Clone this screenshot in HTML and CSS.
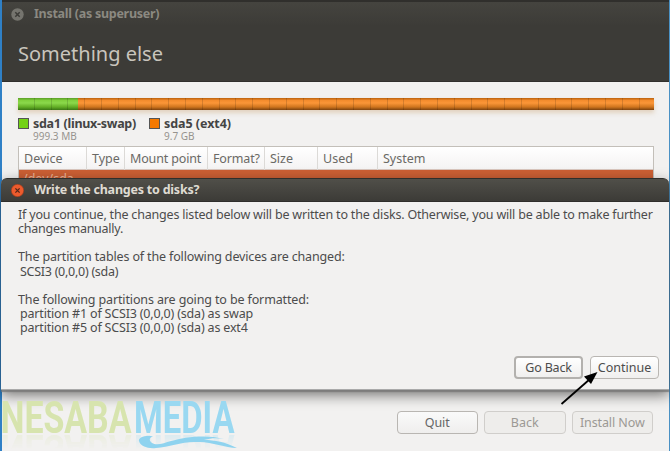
FILE: index.html
```html
<!DOCTYPE html>
<html lang="en">
<head>
<meta charset="utf-8">
<title>Install</title>
<link rel="stylesheet" href="styles.css">
</head>
<body>
<main class="window">
  <header class="head">
    <div class="titlebar">
      <svg class="close" viewBox="0 0 13 13"><circle cx="6.5" cy="6.5" r="6.2" fill="#75746e"/><path d="M4.3 4.3l4.4 4.4M8.7 4.3L4.3 8.7" stroke="#3c3b37" stroke-width="1.5"/></svg>
      <span class="t-install">Install (as superuser)</span>
    </div>
    <h1>Something else</h1>
  </header>
  <section class="content">
    <div class="disk"><div class="swap"></div><div class="ext"></div></div>
    <div class="legend">
      <div class="item first"><i class="sw green"></i><div><b class="l1">sda1 (linux-swap)</b><small>999.3 MB</small></div></div>
      <div class="item"><i class="sw orange"></i><div><b class="l2">sda5 (ext4)</b><small>9.7 GB</small></div></div>
    </div>
    <div class="table">
      <div class="thead">
        <span>Device</span><span>Type</span><span class="mount">Mount point</span><span class="format">Format?</span><span>Size</span><span>Used</span><span>System</span>
      </div>
      <div class="row">/dev/sda</div>
    </div>
  </section>
  <footer class="actions">
    <button class="btn">Quit</button><button class="btn off">Back</button><button class="btn off inst">Install Now</button>
  </footer>
</main>
<section class="dialog">
  <div class="dialog-title">
    <svg class="close" viewBox="0 0 13 13"><circle cx="6.5" cy="6.5" r="6.2" fill="#ed5b2d" stroke="#a43a1b" stroke-width=".6"/><path d="M4.4 4.4l4.2 4.2M8.6 4.4L4.4 8.6" stroke="#54271a" stroke-width="1.3"/></svg>
    <span class="t-write">Write the changes to disks?</span>
  </div>
  <div class="message">
    <p class="m1">If you continue, the changes listed below will be written to the disks. Otherwise, you will be able to make further</p>
    <p class="m2">changes manually.</p>
    <p class="m3 gap">The partition tables of the following devices are changed:</p>
    <p class="m4 in">SCSI3 (0,0,0) (sda)</p>
    <p class="m5 gap">The following partitions are going to be formatted:</p>
    <p class="m6 in">partition #1 of SCSI3 (0,0,0) (sda) as swap</p>
    <p class="m6 in">partition #5 of SCSI3 (0,0,0) (sda) as ext4</p>
  </div>
  <div class="choices"><button class="btn back">Go Back</button><button class="btn cont">Continue</button></div>
</section>
<div class="brand">
  <svg class="words" width="240" height="34" viewBox="0 0 240 34">
    <text x="-1.5" y="33" textLength="131" lengthAdjust="spacingAndGlyphs" fill="#d7e4ae">NESABA</text>
    <text x="132" y="32.5" textLength="100.5" lengthAdjust="spacingAndGlyphs" fill="#99d8f1">MEDIA</text>
  </svg>
  <svg class="wave" width="102" height="14" viewBox="0 0 102 14"><path d="M15 .5C6-1 0 2 1 5c1 5 9 8 17 7 14-1 26-7 43-6 14 0 26 6 38 6C87 6 77 4 66 4c7-2 13-2 20-1C68-2 47 1 33 5c-7 2-14 5-19 2-4-3-2-6 1-6.500Z" fill="#8fd3ef"/></svg>
</div>
<svg class="arrow" width="40" height="36" viewBox="0 0 40 36"><path d="M1.500 32L30 7" stroke="#000" stroke-width="1.800"/><path d="M37.500 0L24 4.500 31 12Z"/></svg>
</body>
</html>
```
FILE: styles.css
```css
* { box-sizing: border-box; }
body { margin: 0; width: 670px; height: 451px; overflow: hidden; position: relative; background: #f2f1f0; font: 12.5px/14.2px "Noto Sans", sans-serif; color: #4c4c4c; }
.window { height: 451px; border-left: 2px solid #2f80c6; border-right: 1px solid #4a91c4; background: #f2f1f0; display: flex; flex-direction: column; }
.head { height: 82px; background: #3c3b37; border-top: 2px solid #302f2c; border-bottom: 1px solid #302f2c; flex: none; }
.titlebar { height: 24px; padding-left: 9px; display: flex; align-items: center; background: linear-gradient(#45443f, #3c3b37); color: #8b8981; font-weight: 700; }
.t-install { letter-spacing: -.27px; }
.t-write { letter-spacing: -.22px; }
.close { width: 13px; height: 13px; flex: none; margin-right: 10px; }
h1 { margin: 15px 0 0 16px; font: 400 20px/26px "Noto Sans", sans-serif; color: #c9c5bd; white-space: nowrap; }
.content { padding: 16px 15px 0 16px; height: 308px; flex: none; }
.disk { height: 12px; display: flex; position: relative; box-shadow: 0 3px 4px #d3b58f80; }
.disk::after { content: ""; position: absolute; inset: 0; background: repeating-linear-gradient(90deg, transparent 0 15.8px, #00000024 15.8px 16.8px); }
.swap { width: 60px; background: linear-gradient(#62a82b 0 1px, #7fce3b 2px, #8bd84b 5px, #62ad25 9px, #3b7616); }
.ext { flex: 1; background: linear-gradient(#c66a13 0 1px, #f28a2b 2px, #fb9638 5px, #cf741d 9px, #7d430f); }
.legend { display: flex; margin-top: 7px; }
.item { display: flex; width: 120px; }
.item.first { width: 131px; }
.sw { width: 11px; height: 11px; margin: 1px 4px 0 0; border: 1px solid #555; flex: none; }
.green { background: #73d216; }
.orange { background: #f57900; }
.item b, .item small { display: block; white-space: nowrap; }
.item b { line-height: 13px; color: #444; }
.l1 { letter-spacing: -.29px; }
.l2 { letter-spacing: -.05px; }
.item small { font-size: 10px; line-height: 12px; color: #96938e; }
.table { margin: 4px 0 0; border: 1px solid #c3bfb9; height: 238px; background: #fff; }
.thead { display: grid; grid-template-columns: 68px 38px 83px 57px 53px 60px 1fr; height: 23px; background: linear-gradient(#fff, #f4f3f3); border-bottom: 1px solid #d8c5bd; line-height: 23px; color: #6a6965; }
.thead span { padding-left: 5px; border-right: 1px solid #dcdad7; white-space: nowrap; }
.thead .mount { letter-spacing: -.15px; }
.thead .format { letter-spacing: -.15px; }
.thead span:last-child { border: 0; }
.row { height: 20px; background: #cb5f34; color: #eab397; padding-left: 4px; line-height: 18px; }
.actions { display: flex; gap: 6px; justify-content: flex-end; padding: 21px 16px 0 0; }
.btn { width: 82px; height: 23px; padding: 0; border: 1px solid #b9b6b2; border-radius: 4px; background: linear-gradient(#fafafa, #efeeed); font: 12.5px/19px "Noto Sans", sans-serif; color: #666; white-space: nowrap; }
.actions .btn { width: 81.5px; }
.inst { letter-spacing: -.1px; }
.actions .off { background: #eeedeb; border-color: #d0cecb; color: #9c9994; }
.dialog { position: absolute; left: 1px; top: 178px; width: 668px; height: 212px; background: #f2f1f0; border-radius: 6px 6px 0 0; border-bottom: 1px solid #aaa; box-shadow: 0 2px 1px #777777cc, 0 5px 14px #00000088; }
.dialog-title { height: 24px; padding-left: 10px; display: flex; align-items: center; background: linear-gradient(#504f49, #3c3b37); border: solid #2f2e2b; border-width: 1px 0; border-radius: 6px 6px 0 0; color: #dfdbd2; font-weight: 700; }
.message { padding: 6px 0 0 17px; height: 154px; }
p { margin: 0; white-space: nowrap; }
.m1 { letter-spacing: -.19px; }
.m2 { letter-spacing: -.25px; }
.m3 { letter-spacing: -.15px; }
.m4 { letter-spacing: -.27px; }
.m5 { letter-spacing: -.13px; }
.m6 { letter-spacing: -.18px; }
.gap { margin-top: 14px; }
.in { padding-left: 2px; }
.choices { display: flex; justify-content: flex-end; gap: 7px; padding-right: 10px; }
.choices .btn { width: 69px; color: #4c4c4c; background: linear-gradient(#fff, #f0efee); }
.choices .back { border: 2px solid #b3b1ae; line-height: 17px; letter-spacing: -.2px; }
.brand { position: absolute; left: 2px; top: 400px; width: 240px; height: 51px; }
.words { display: block; font: 700 45px Roboto, sans-serif; -webkit-box-reflect: below 0 linear-gradient(transparent 55%, #00000040); }
.wave { position: absolute; left: 136px; top: 36px; }
.arrow { position: absolute; left: 560px; top: 372px; }
```
